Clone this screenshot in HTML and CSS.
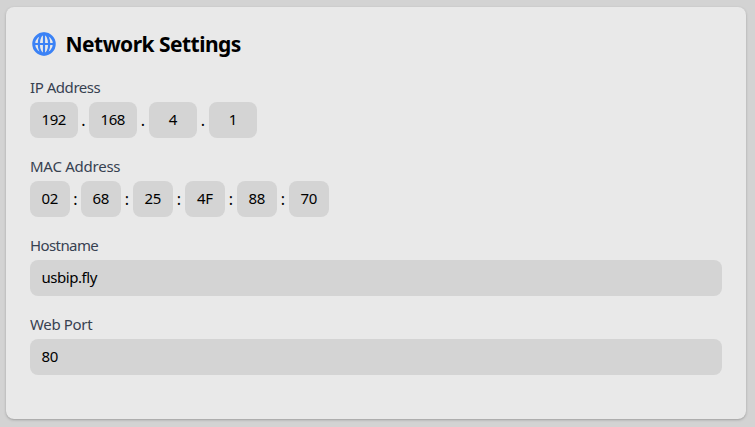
FILE: index.html
```html
<!DOCTYPE html>
<html lang="en">
<head>
<meta charset="utf-8">
<title>Network Settings</title>
<link rel="stylesheet" href="styles.css">
</head>
<body>
<main class="card">
  <h2 class="title">
    <svg class="globe" viewBox="0 0 28 28" fill="none" stroke="currentColor" stroke-width="2.2"><circle cx="14" cy="14" r="10.3" stroke-width="2.9"/><ellipse cx="14" cy="14" rx="5.2" ry="10.3"/><path d="M14 3.5v21M3.5 14h21"/></svg>
    <span class="title-text">Network Settings</span>
  </h2>
  <section class="field">
    <div class="label"><span class="l-ip">IP Address</span></div>
    <div class="group ip"><span class="box">192</span><i>.</i><span class="box">168</span><i>.</i><span class="box">4</span><i>.</i><span class="box">1</span></div>
  </section>
  <section class="field">
    <div class="label"><span class="l-mac">MAC Address</span></div>
    <div class="group mac"><span class="box">02</span><i>:</i><span class="box">68</span><i>:</i><span class="box">25</span><i>:</i><span class="box">4F</span><i>:</i><span class="box">88</span><i>:</i><span class="box">70</span></div>
  </section>
  <section class="field">
    <div class="label"><span class="l-host">Hostname</span></div>
    <div class="box wide"><span class="v-host">usbip.fly</span></div>
  </section>
  <section class="field">
    <div class="label"><span class="l-port">Web Port</span></div>
    <div class="box wide">80</div>
  </section>
</main>
</body>
</html>
```
FILE: styles.css
```css
* { box-sizing: border-box; }
body {
  margin: 0;
  height: 427px;
  overflow: hidden;
  padding: 7px 9px 8px 6px;
  background: #d3d3d3;
  color: #000;
  font: 15px/20px "Noto Sans", "Open Sans", sans-serif;
}
.card {
  height: 412px;
  padding: 23px 24px;
  border-radius: 8px;
  background: #e9e9e9;
  box-shadow: 0 1px 3px rgba(0, 0, 0, .2), 0 1px 2px -1px rgba(0, 0, 0, .2);
}
.title {
  display: flex;
  align-items: center;
  height: 28px;
  margin: 0 0 12px;
  font-size: 21px;
  line-height: 28px;
}
.title-text { letter-spacing: -.53px; }
.globe { width: 28px; height: 28px; margin: 0 8px 0 -.5px; color: #3b82f6; }
.field { height: 79px; padding-top: 7px; }
.label { height: 25px; color: #374151; letter-spacing: -.45px; }
.l-mac { letter-spacing: -.25px; }
.l-host { letter-spacing: -.6px; }
.l-port { letter-spacing: -.35px; }
.box {
  display: flex;
  align-items: center;
  justify-content: center;
  height: 36px;
  padding-bottom: 2px;
  border-radius: 8px;
  background: #d4d4d4;
  letter-spacing: -.45px;
}
.wide { justify-content: flex-start; padding-left: 11.5px; }
.group { display: flex; align-items: center; }
.ip .box { width: 48px; }
.mac .box { width: 40px; }
.group .box { padding-right: .5px; }
.group i { width: 12px; font-style: normal; font-size: 16px; text-align: center; }
.group i:first-of-type { width: 11px; }
```
